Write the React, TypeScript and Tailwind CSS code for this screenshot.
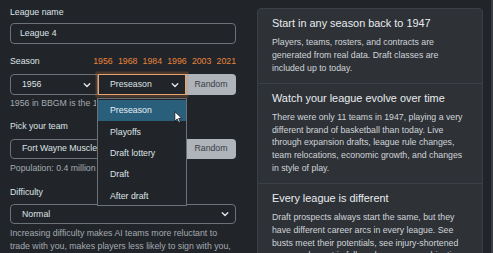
import React from 'react';

const Chevron = ({ className = '' }: { className?: string }) => (
  <svg viewBox="0 0 16 16" className={`w-[8px] h-[8px] ${className}`} fill="none">
    <path d="M2.5 5.5l5.5 5.5 5.5-5.5" stroke="#dee2e6" strokeWidth="2.8" strokeLinecap="round" strokeLinejoin="round" />
  </svg>
);

const Cursor = () => (
  <svg viewBox="0 0 12 18" className="absolute left-[76px] top-[11px] w-[9px] h-[13px]">
    <path d="M1 1v13l3.2-3 2.2 5 2-1-2.2-4.8H10.5z" fill="#ffffff" stroke="#111" strokeWidth="1" strokeLinejoin="round" />
  </svg>
);

const years = ['1956', '1968', '1984', '1996', '2003', '2021'];
const phases = ['Preseason', 'Playoffs', 'Draft lottery', 'Draft', 'After draft'];

const features = [
  {
    title: 'Start in any season back to 1947',
    body: 'Players, teams, rosters, and contracts are generated from real data. Draft classes are included up to today.',
  },
  {
    title: 'Watch your league evolve over time',
    body: 'There were only 11 teams in 1947, playing a very different brand of basketball than today. Live through expansion drafts, league rule changes, team relocations, economic growth, and changes in style of play.',
  },
  {
    title: 'Every league is different',
    body: 'Draft prospects always start the same, but they have different career arcs in every league. See busts meet their potentials, see injury-shortened careers play out in full, and see new combinations of players on the same team.',
  },
];

export default function App() {
  return (
    <div
      className="w-[493px] h-[253px] overflow-hidden bg-[#212529] text-[#dee2e6] flex"
      style={{ fontFamily: '"Liberation Sans", Arial, sans-serif' }}
    >
      {/* Left: form */}
      <div className="relative w-[226px] ml-[10px] pt-[5.5px] flex flex-col text-[8.75px] leading-[13px]">
        <div>League name</div>
        <div className="mt-[4.5px] h-[23px] border border-[#6c7177] rounded-[4px] flex items-center pl-[9px]">
          League 4
        </div>

        <div className="mt-[10.5px] flex justify-between items-center">
          <span>Season</span>
          <div className="flex gap-[5.2px] text-[#e8843c]">
            {years.map((y) => (
              <span key={y}>{y}</span>
            ))}
          </div>
        </div>

        <div className="mt-[6.5px] h-[22px] flex">
          <div className="w-[88px] border border-[#6c7177] rounded-l-[4px] flex items-center justify-between pl-[11px] pr-[6px]">
            <span>1956</span>
            <Chevron />
          </div>
          <div className="w-[88px] border border-[#e9a46e] shadow-[0_0_0_2.5px_rgba(232,132,60,0.22)] flex items-center justify-between pl-[11px] pr-[6px] relative z-10">
            <span>Preseason</span>
            <Chevron />
          </div>
          <div className="flex-1 bg-[#aeb4ba] text-[#3a3f45] rounded-r-[4px] flex items-center justify-center">
            Random
          </div>
        </div>

        <div className="mt-[2.5px] w-[86px] overflow-hidden text-[#a4aab0] whitespace-nowrap">1956 in BBGM is the 1</div>

        <div className="mt-[11px]">Pick your team</div>
        <div className="mt-[5.5px] h-[22px] flex">
          <div className="w-[176px] border border-[#6c7177] rounded-l-[4px] flex items-center pl-[11px]">
            <span className="w-[75px] overflow-hidden whitespace-nowrap">Fort Wayne Muscle</span>
          </div>
          <div className="flex-1 bg-[#aeb4ba] text-[#3a3f45] rounded-r-[4px] flex items-center justify-center">
            Random
          </div>
        </div>
        <div className="mt-[2.5px] text-[#a4aab0] whitespace-nowrap">Population: 0.4 million</div>

        <div className="mt-[11px]">Difficulty</div>
        <div className="mt-[5.5px] h-[22px] border border-[#6c7177] rounded-[4px] flex items-center justify-between pl-[11px] pr-[6px]">
          <span>Normal</span>
          <Chevron />
        </div>
        <div className="mt-[2.5px] text-[#a4aab0] whitespace-nowrap">
          Increasing difficulty makes AI teams more reluctant to
          <br />
          trade with you, makes players less likely to sign with you,
        </div>

        {/* Open dropdown list */}
        <div className="absolute left-[87px] top-[98px] w-[90px] h-[108px] bg-[#212529] border border-[#6c7177] z-20 pt-px">
          {phases.map((p, i) => (
            <div
              key={p}
              className={`relative h-[21.4px] flex items-center pl-[12px] ${i === 0 ? 'bg-[#2a5f7c] text-[#e6eef3]' : ''}`}
            >
              {p}
              {i === 0 && <Cursor />}
            </div>
          ))}
        </div>
      </div>

      {/* Right: features card */}
      <div className="ml-[21px] mt-[8px] w-[226px] self-start bg-[#2e3237] border border-[#3a3f45] rounded-[4px]">
        {features.map((f, i) => (
          <div key={f.title} className={`px-[14px] pt-[8px] pb-[8.5px] ${i > 0 ? 'border-t border-[#3c4147]' : ''}`}>
            <div className="text-[10.9px] leading-[13px] text-[#e9ecef]">{f.title}</div>
            <div className="mt-[6px] text-[8.75px] leading-[12.75px] text-[#d0d4d8]">{f.body}</div>
          </div>
        ))}
      </div>

      <div className="flex-1" />
      <div className="w-[2px] h-full bg-[#3a3e43]" />
    </div>
  );
}
